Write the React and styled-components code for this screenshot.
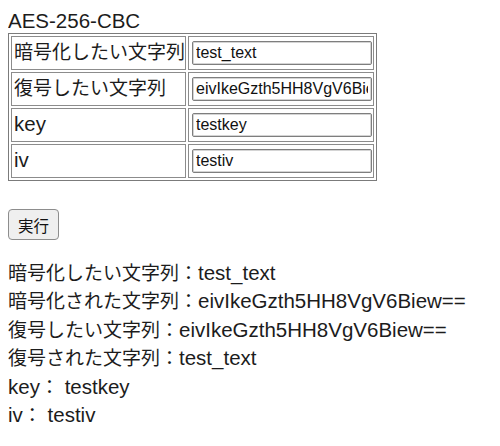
import React, { useState } from "react";
import styled, { createGlobalStyle } from "styled-components";

const GlobalStyle = createGlobalStyle`
  body {
    margin: 8px;
    background: #fff;
    color: #1c1c1c;
    font-family: "Liberation Sans", "Noto Sans CJK JP", sans-serif;
    font-size: 19px;
  }
`;

const ENCRYPTED = "eivIkeGzth5HH8VgV6Biew==";

const App = () => {
  const [plain, setPlain] = useState("test_text");
  const [cipher, setCipher] = useState(ENCRYPTED);
  const [key, setKey] = useState("testkey");
  const [iv, setIv] = useState("testiv");
  const [result, setResult] = useState({
    plain: "test_text",
    encrypted: ENCRYPTED,
    cipher: ENCRYPTED,
    decrypted: "test_text",
    key: "testkey",
    iv: "testiv",
  });

  const run = () => {
    setResult({
      plain,
      encrypted: ENCRYPTED,
      cipher,
      decrypted: "test_text",
      key,
      iv,
    });
  };

  const rows = [
    { label: "暗号化したい文字列", value: plain, set: setPlain },
    { label: "復号したい文字列", value: cipher, set: setCipher },
    { label: "key", value: key, set: setKey, latin: true },
    { label: "iv", value: iv, set: setIv, latin: true },
  ];

  return (
    <>
      <GlobalStyle />
      <Title>AES-256-CBC</Title>
      <Table>
        <tbody>
          {rows.map((r) => (
            <tr key={r.label}>
              <LabelCell>
                <Text $latin={r.latin}>{r.label}</Text>
              </LabelCell>
              <FieldCell>
                <Field
                  type="text"
                  value={r.value}
                  onChange={(e) => r.set(e.target.value)}
                />
              </FieldCell>
            </tr>
          ))}
        </tbody>
      </Table>

      <RunButton onClick={run}>実行</RunButton>

      <Results>
        <Line>
          <Text>暗号化したい文字列：</Text>
          <Text $latin>{result.plain}</Text>
        </Line>
        <Line>
          <Text>暗号化された文字列：</Text>
          <Text $latin>{result.encrypted}</Text>
        </Line>
        <Line>
          <Text>復号したい文字列：</Text>
          <Text $latin>{result.cipher}</Text>
        </Line>
        <Line>
          <Text>復号された文字列：</Text>
          <Text $latin>{result.decrypted}</Text>
        </Line>
        <Line>
          <Text $latin>key</Text>
          <Text>：</Text>
          <Text $latin> {result.key}</Text>
        </Line>
        <Line>
          <Text $latin>iv</Text>
          <Text>：</Text>
          <Text $latin> {result.iv}</Text>
        </Line>
      </Results>
    </>
  );
};

export default App;

const Title = styled.div`
  font-size: 20.5px;
  line-height: 25px;
`;

const Text = styled.span`
  font-size: ${(p) => (p.$latin ? "20.5px" : "19px")};
  line-height: 1;
  white-space: pre;
`;

const Table = styled.table`
  width: 369px;
  border: 1px solid #7b7b7b;
  border-spacing: 2px;
  border-collapse: separate;
  table-layout: fixed;
`;

const LabelCell = styled.td`
  width: 175px;
  height: 34px;
  box-sizing: border-box;
  padding: 0 0 0 2px;
  border: 1px solid #8c8c8c;
  vertical-align: middle;
  white-space: nowrap;
  overflow: visible;
`;

const FieldCell = styled.td`
  height: 34px;
  box-sizing: border-box;
  padding: 0 1px 0 2px;
  border: 1px solid #8c8c8c;
  vertical-align: middle;
`;

const Field = styled.input`
  display: block;
  width: 180px;
  height: 24px;
  box-sizing: border-box;
  margin: 0 0 0 1px;
  padding: 0 3px;
  border: 1px solid #7e7e7e;
  border-radius: 2px;
  box-shadow: inset 0 0 0 1px #d4d4d4;
  background: #fff;
  font: 16px "Liberation Sans", sans-serif;
  color: #111;
  outline: none;
`;

const RunButton = styled.button`
  display: block;
  margin-top: 28px;
  width: 51px;
  height: 31px;
  padding: 0;
  background: #efefef;
  border: 1px solid #8d8d8d;
  border-radius: 4px;
  font: 15.5px "Noto Sans CJK JP", sans-serif;
  color: #111;
  cursor: pointer;
`;

const Results = styled.div`
  margin-top: 20px;
`;

const Line = styled.div`
  line-height: 28.4px;
  white-space: nowrap;
`;
